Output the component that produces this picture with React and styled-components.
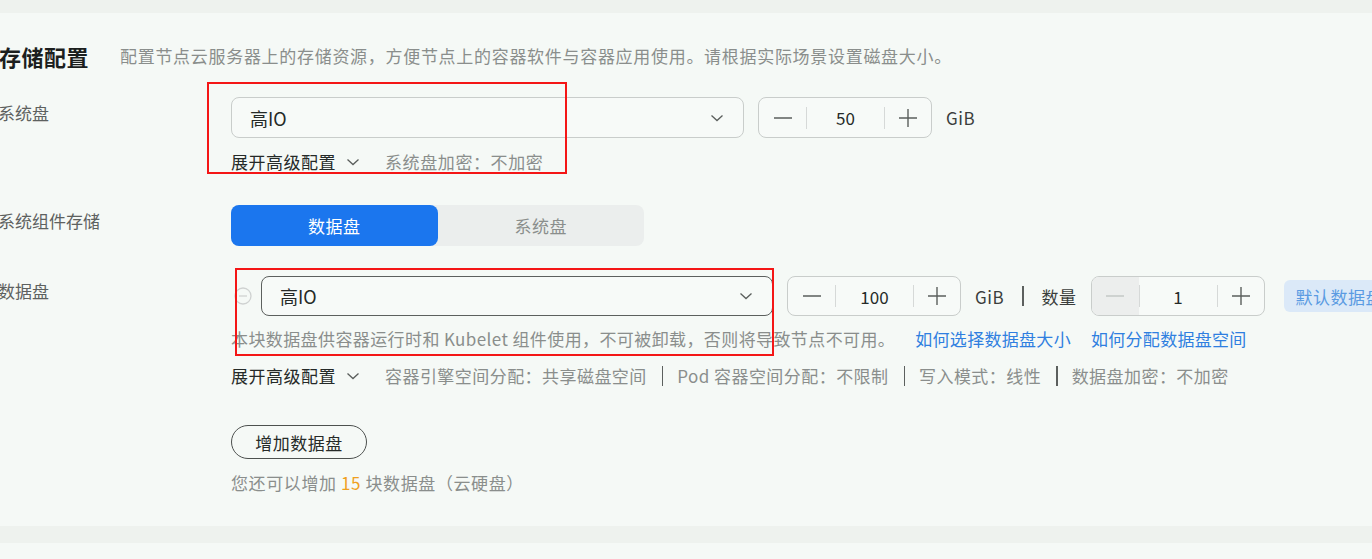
import styled, { createGlobalStyle, css } from "styled-components";

const GlobalStyle = createGlobalStyle`
  html, body {
    margin: 0;
    padding: 0;
    background: #f5f9f6;
  }
  body {
    font-family: "Noto Sans CJK SC", "Noto Sans", sans-serif;
    color: #252a28;
    overflow: hidden;
  }
`;

const Band = styled.div`
  height: ${({ $h }) => $h}px;
  background: #eef2ee;
`;

const Card = styled.section`
  position: relative;
  height: 513px;
  box-sizing: border-box;
  padding-top: 27px;
  background: #f5f9f6;
`;

const Header = styled.div`
  display: flex;
  align-items: center;
  gap: 31px;
  margin-left: -1px;
`;

const Title = styled.h2`
  margin: 0;
  font-size: 22px;
  line-height: 32px;
  font-weight: 700;
  letter-spacing: 0.5px;
  color: #1c1f1e;
`;

const Desc = styled.p`
  margin: 0;
  font-size: 17px;
  line-height: 24px;
  letter-spacing: 0.7px;
  color: #8a8e8c;
`;

const Row = styled.div`
  display: grid;
  grid-template-columns: 231px 1fr;
  margin-top: ${({ $mt }) => $mt}px;
`;

const Label = styled.div`
  font-size: 17px;
  line-height: 24px;
  padding-top: ${({ $pt }) => $pt}px;
  margin-left: -2px;
  color: #5d6160;
`;

const Field = styled.div`
  display: flex;
  flex-direction: column;
  min-width: 0;
`;

const Line = styled.div`
  display: flex;
  align-items: center;
  gap: ${({ $gap }) => $gap ?? 14}px;
  margin-top: ${({ $mt }) => $mt || 0}px;
  white-space: nowrap;
  & > * {
    flex-shrink: 0;
  }
`;

const Select = styled.div`
  box-sizing: border-box;
  width: ${({ $w }) => $w}px;
  height: ${({ $h }) => $h}px;
  display: flex;
  align-items: center;
  justify-content: space-between;
  padding: 0 18px;
  border-radius: 8px;
  border: 1px solid #c9cdcb;
  background: #f7faf8;
  font-size: 18px;
  color: #252a28;
  ${({ $active }) =>
    $active &&
    css`
      border: 1.5px solid #5c605e;
    `}
`;

const Stepper = styled.div`
  box-sizing: border-box;
  width: 174px;
  height: ${({ $h }) => $h}px;
  display: grid;
  grid-template-columns: 47px 1fr 46px;
  align-items: center;
  border: 1px solid #c9cdcb;
  border-radius: 8px;
  overflow: hidden;
  background: #f7faf8;
`;

const StepBtn = styled.div`
  height: 100%;
  display: flex;
  align-items: center;
  justify-content: center;
  color: ${({ $disabled }) => ($disabled ? "#c4c8c6" : "#5a5e5c")};
  background: ${({ $disabled }) => ($disabled ? "#eceeed" : "transparent")};
`;

const StepValue = styled.div`
  position: relative;
  height: 100%;
  display: flex;
  align-items: center;
  justify-content: center;
  font-size: 17px;
  color: #252a28;
  &::before,
  &::after {
    content: "";
    position: absolute;
    top: 50%;
    width: 1px;
    height: 22px;
    margin-top: -11px;
    background: #d6d9d8;
  }
  &::before {
    left: 0;
  }
  &::after {
    right: 0;
  }
`;

const Unit = styled.span`
  font-size: 17px;
  letter-spacing: 0.5px;
  color: #3a3e3c;
`;

const Bar = styled.span`
  display: inline-block;
  width: 1.5px;
  height: 20px;
  margin: 0 ${({ $mx }) => $mx || 0}px;
  background: #5c605e;
`;

const Toggle = styled.div`
  display: flex;
  width: 413px;
  height: 41px;
  border-radius: 8px;
  background: #ebeeed;
`;

const ToggleItem = styled.div`
  flex: 1;
  display: flex;
  align-items: center;
  justify-content: center;
  border-radius: 8px;
  font-size: 17px;
  letter-spacing: 0.5px;
  color: ${({ $on }) => ($on ? "#ffffff" : "#8a8e8c")};
  background: ${({ $on }) => ($on ? "#1b76ee" : "transparent")};
`;

const Advanced = styled.span`
  display: inline-flex;
  align-items: center;
  gap: 9px;
  font-size: 17px;
  line-height: 24px;
  letter-spacing: 0.5px;
  color: #252a28;
`;

const Muted = styled.span`
  font-size: 17px;
  line-height: 24px;
  letter-spacing: ${({ $ls }) => $ls ?? 0.6}px;
  color: #8a8e8c;
`;

const Link = styled.a`
  font-size: 17px;
  line-height: 24px;
  letter-spacing: 0.3px;
  color: #2f7fe0;
  text-decoration: none;
`;

const GhostBlue = styled.div`
  height: 32px;
  margin-left: 5px;
  padding: 0 12px;
  display: flex;
  align-items: center;
  border-radius: 6px;
  background: #dbe9f8;
  color: #5a9be2;
  font-size: 17px;
  letter-spacing: 0.5px;
`;

const AddButton = styled.button`
  align-self: flex-start;
  box-sizing: border-box;
  width: 136px;
  height: 34px;
  margin-top: 37px;
  padding: 0;
  border-radius: 17px;
  border: 1px solid #4d514f;
  background: transparent;
  font-family: inherit;
  font-size: 17px;
  letter-spacing: 0.5px;
  color: #252a28;
`;

const Count = styled.span`
  color: #f0a01e;
`;

const RemoveIcon = styled.span`
  display: inline-flex;
  width: 18px;
  margin: 0 9px 0 3px;
`;

const Callout = styled.div`
  position: absolute;
  box-sizing: border-box;
  border: 2px solid #f41616;
  pointer-events: none;
`;

const Chevron = ({ size = 16, color = "#5a5e5c" }) => (
  <svg width={size} height={size} viewBox="0 0 16 16" fill="none">
    <polyline points="2.5,5.5 8,10.5 13.5,5.5" stroke={color} strokeWidth="1.3" />
  </svg>
);

const Minus = () => (
  <svg width="20" height="20" viewBox="0 0 20 20">
    <line x1="1" y1="10" x2="19" y2="10" stroke="currentColor" strokeWidth="1.4" />
  </svg>
);

const Plus = () => (
  <svg width="20" height="20" viewBox="0 0 20 20">
    <line x1="1" y1="10" x2="19" y2="10" stroke="currentColor" strokeWidth="1.4" />
    <line x1="10" y1="1" x2="10" y2="19" stroke="currentColor" strokeWidth="1.4" />
  </svg>
);

const CircleMinus = () => (
  <svg width="18" height="18" viewBox="0 0 18 18" fill="none">
    <circle cx="9" cy="9" r="8" stroke="#cfd2d1" strokeWidth="1.3" />
    <line x1="5" y1="9" x2="13" y2="9" stroke="#cfd2d1" strokeWidth="1.3" />
  </svg>
);

function NumberInput({ value, height = 41, disabled }) {
  return (
    <Stepper $h={height}>
      <StepBtn $disabled={disabled}>
        <Minus />
      </StepBtn>
      <StepValue>{value}</StepValue>
      <StepBtn>
        <Plus />
      </StepBtn>
    </Stepper>
  );
}

const dataDiskInfo = [
  "容器引擎空间分配：共享磁盘空间",
  "Pod 容器空间分配：不限制",
  "写入模式：线性",
  "数据盘加密：不加密",
];

export default function App() {
  return (
    <>
      <GlobalStyle />
      <Band $h={13} />
      <Card>
        <Header>
          <Title>存储配置</Title>
          <Desc>配置节点云服务器上的存储资源，方便节点上的容器软件与容器应用使用。请根据实际场景设置磁盘大小。</Desc>
        </Header>

        <Row $mt={25}>
          <Label $pt={4}>系统盘</Label>
          <Field>
            <Line>
              <Select $w={513} $h={41}>
                <span>高IO</span>
                <Chevron />
              </Select>
              <NumberInput value="50" />
              <Unit>GiB</Unit>
            </Line>
            <Line $mt={12} $gap={24}>
              <Advanced>
                展开高级配置 <Chevron />
              </Advanced>
              <Muted>系统盘加密：不加密</Muted>
            </Line>
          </Field>
        </Row>

        <Row $mt={31}>
          <Label $pt={4}>系统组件存储</Label>
          <Field>
            <Toggle>
              <ToggleItem $on>数据盘</ToggleItem>
              <ToggleItem>系统盘</ToggleItem>
            </Toggle>
          </Field>
        </Row>

        <Row $mt={30}>
          <Label $pt={3}>数据盘</Label>
          <Field>
            <Line $gap={0}>
              <RemoveIcon>
                <CircleMinus />
              </RemoveIcon>
              <Line $gap={14}>
                <Select $w={512} $h={40} $active>
                  <span>高IO</span>
                  <Chevron />
                </Select>
                <NumberInput value="100" height={40} />
                <Unit>GiB</Unit>
                <Bar $mx={4} />
                <Unit>数量</Unit>
                <NumberInput value="1" height={40} disabled />
                <GhostBlue>默认数据盘</GhostBlue>
              </Line>
            </Line>
            <Line $mt={11} $gap={20}>
              <Muted $ls={0.4}>本块数据盘供容器运行时和 Kubelet 组件使用，不可被卸载，否则将导致节点不可用。</Muted>
              <Link>如何选择数据盘大小</Link>
              <Link>如何分配数据盘空间</Link>
            </Line>
            <Line $mt={13} $gap={15}>
              <Advanced style={{ marginRight: 9 }}>
                展开高级配置 <Chevron />
              </Advanced>
              {dataDiskInfo.map((t, i) => (
                <Line key={t} $gap={14}>
                  {i > 0 && <Bar />}
                  <Muted $ls={0.45}>{t}</Muted>
                </Line>
              ))}
            </Line>
            <AddButton>增加数据盘</AddButton>
            <Line $mt={12}>
              <Muted>
                您还可以增加 <Count>15</Count> 块数据盘（云硬盘）
              </Muted>
            </Line>
          </Field>
        </Row>

        <Callout style={{ left: 207, top: 69, width: 360, height: 92 }} />
        <Callout style={{ left: 235, top: 255, width: 539, height: 88 }} />
      </Card>
      <Band $h={17} />
    </>
  );
}
